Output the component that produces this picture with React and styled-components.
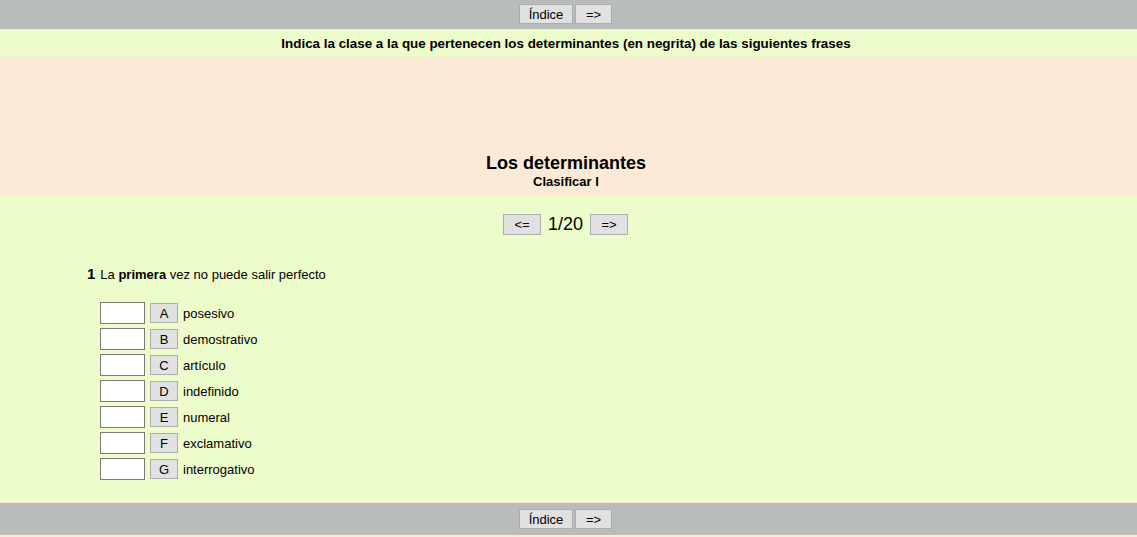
import React from "react";
import styled, { createGlobalStyle } from "styled-components";

const Global = createGlobalStyle`
  html, body { margin: 0; padding: 0; }
  body {
    background: #fdead6;
    font-family: "Liberation Sans", Arial, sans-serif;
    color: #000;
  }
`;

const Page = styled.div`
  display: flex;
  flex-direction: column;
  width: 1137px;
`;

const ToolBar = styled.div`
  background: #b8bdbb;
  height: ${(p) => p.$h}px;
  margin-top: ${(p) => p.$mt || 0}px;
  display: flex;
  justify-content: center;
  align-items: flex-start;
  gap: 2px;
  padding-top: ${(p) => p.$pt}px;
  padding-right: 6px;
  box-sizing: border-box;
`;

const Btn = styled.button`
  box-sizing: border-box;
  height: ${(p) => p.$h || 20}px;
  width: ${(p) => p.$w}px;
  padding: 0;
  margin: 0;
  background: #e1e1e1;
  border: 1px solid #adadad;
  border-radius: 0;
  font-family: "Liberation Sans", Arial, sans-serif;
  font-size: 13px;
  color: #000;
  line-height: 1;
  display: flex;
  align-items: center;
  justify-content: center;
`;

const Instruction = styled.div`
  margin-top: 1px;
  background: #edfccb;
  height: 27px;
  display: flex;
  align-items: center;
  justify-content: center;
  padding-right: 5px;
  font-weight: bold;
  font-size: 13.4px;
`;

const Header = styled.div`
  height: 138px;
  display: flex;
  flex-direction: column;
  justify-content: flex-end;
  align-items: center;
  padding-bottom: 5px;
  padding-right: 5px;
  box-sizing: border-box;
`;

const Title = styled.div`
  font-size: 18px;
  font-weight: bold;
  line-height: 22px;
`;

const Subtitle = styled.div`
  font-size: 13px;
  font-weight: bold;
  line-height: 16px;
`;

const Content = styled.div`
  background: #edfccb;
  height: 307px;
  display: flex;
  flex-direction: column;
  padding-top: 19px;
  box-sizing: border-box;
`;

const Pager = styled.div`
  display: flex;
  justify-content: center;
  align-items: center;
  gap: 7px;
  height: 21px;
  padding-right: 6px;
`;

const PageCount = styled.span`
  font-size: 18px;
  line-height: 21px;
`;

const Question = styled.div`
  margin-top: 30px;
  margin-left: 87px;
  display: flex;
  align-items: baseline;
  gap: 5px;
  font-size: 13px;
  line-height: 17px;
`;

const QNum = styled.span`
  font-size: 15px;
  font-weight: bold;
`;

const Options = styled.div`
  margin-top: 19px;
  margin-left: 100px;
  display: flex;
  flex-direction: column;
  gap: 4px;
`;

const OptionRow = styled.div`
  display: flex;
  align-items: center;
  height: 22px;
`;

const AnswerBox = styled.input`
  box-sizing: border-box;
  width: 45px;
  height: 22px;
  margin: 0;
  background: #fff;
  border: 1px solid #7a7a7a;
  border-radius: 0;
  padding: 0;
`;

const LetterBtn = styled(Btn)`
  margin-left: 5px;
`;

const OptionLabel = styled.span`
  margin-left: 5px;
  font-size: 13px;
`;

const options = [
  ["A", "posesivo"],
  ["B", "demostrativo"],
  ["C", "artículo"],
  ["D", "indefinido"],
  ["E", "numeral"],
  ["F", "exclamativo"],
  ["G", "interrogativo"],
];

export default function App() {
  return (
    <>
      <Global />
      <Page>
        <ToolBar $h={29} $pt={4}>
          <Btn $w={54}>Índice</Btn>
          <Btn $w={37}>=&gt;</Btn>
        </ToolBar>
        <Instruction>
          Indica la clase a la que pertenecen los determinantes (en negrita) de las siguientes frases
        </Instruction>
        <Header>
          <Title>Los determinantes</Title>
          <Subtitle>Clasificar I</Subtitle>
        </Header>
        <Content>
          <Pager>
            <Btn $w={38} $h={21}>&lt;=</Btn>
            <PageCount>1/20</PageCount>
            <Btn $w={38} $h={21}>=&gt;</Btn>
          </Pager>
          <Question>
            <QNum>1</QNum>
            <span>
              La <b>primera</b> vez no puede salir perfecto
            </span>
          </Question>
          <Options>
            {options.map(([l, t]) => (
              <OptionRow key={l}>
                <AnswerBox type="text" />
                <LetterBtn $w={28}>{l}</LetterBtn>
                <OptionLabel>{t}</OptionLabel>
              </OptionRow>
            ))}
          </Options>
        </Content>
        <ToolBar $h={32} $pt={6} $mt={1}>
          <Btn $w={54}>Índice</Btn>
          <Btn $w={37}>=&gt;</Btn>
        </ToolBar>
      </Page>
    </>
  );
}
